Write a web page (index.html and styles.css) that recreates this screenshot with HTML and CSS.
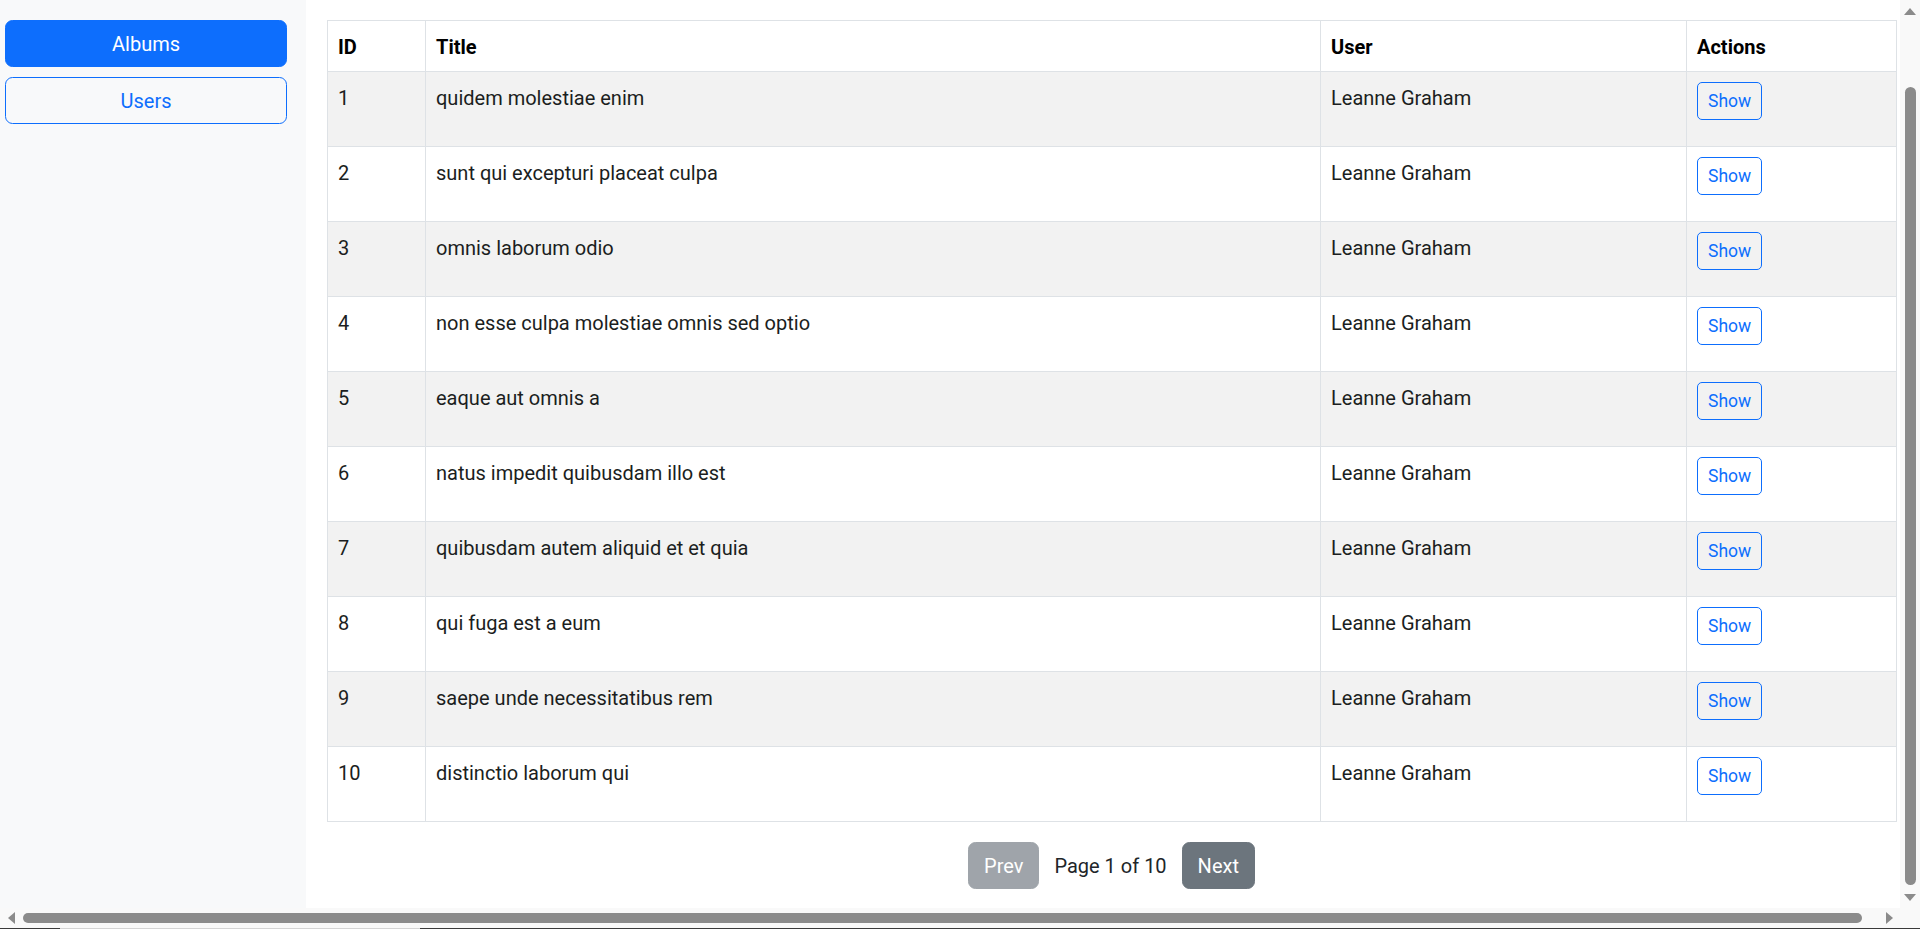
FILE: index.html
```html
<!DOCTYPE html>
<html lang="en">
<head>
<meta charset="utf-8">
<title>Albums</title>
<link rel="stylesheet" href="styles.css">
</head>
<body>
<div class="window">
  <div class="pane">
    <div class="page">
      <aside class="sidebar">
        <button class="nav-btn nav-btn-active" type="button">Albums</button>
        <button class="nav-btn nav-btn-outline" type="button">Users</button>
      </aside>
      <main class="content">
        <table class="data-table">
          <colgroup>
            <col class="col-id">
            <col class="col-title">
            <col class="col-user">
            <col class="col-actions">
          </colgroup>
          <thead>
            <tr><th>ID</th><th>Title</th><th>User</th><th>Actions</th></tr>
          </thead>
          <tbody>
            <tr><td>1</td><td>quidem molestiae enim</td><td>Leanne Graham</td><td class="cell-actions"><button class="show-btn" type="button">Show</button></td></tr>
            <tr><td>2</td><td>sunt qui excepturi placeat culpa</td><td>Leanne Graham</td><td class="cell-actions"><button class="show-btn" type="button">Show</button></td></tr>
            <tr><td>3</td><td>omnis laborum odio</td><td>Leanne Graham</td><td class="cell-actions"><button class="show-btn" type="button">Show</button></td></tr>
            <tr><td>4</td><td>non esse culpa molestiae omnis sed optio</td><td>Leanne Graham</td><td class="cell-actions"><button class="show-btn" type="button">Show</button></td></tr>
            <tr><td>5</td><td>eaque aut omnis a</td><td>Leanne Graham</td><td class="cell-actions"><button class="show-btn" type="button">Show</button></td></tr>
            <tr><td>6</td><td>natus impedit quibusdam illo est</td><td>Leanne Graham</td><td class="cell-actions"><button class="show-btn" type="button">Show</button></td></tr>
            <tr><td>7</td><td>quibusdam autem aliquid et et quia</td><td>Leanne Graham</td><td class="cell-actions"><button class="show-btn" type="button">Show</button></td></tr>
            <tr><td>8</td><td>qui fuga est a eum</td><td>Leanne Graham</td><td class="cell-actions"><button class="show-btn" type="button">Show</button></td></tr>
            <tr><td>9</td><td>saepe unde necessitatibus rem</td><td>Leanne Graham</td><td class="cell-actions"><button class="show-btn" type="button">Show</button></td></tr>
            <tr><td>10</td><td>distinctio laborum qui</td><td>Leanne Graham</td><td class="cell-actions"><button class="show-btn" type="button">Show</button></td></tr>
          </tbody>
        </table>
        <div class="pager">
          <button class="pager-btn pager-btn-disabled" type="button" disabled>Prev</button>
          <span class="pager-label">Page 1 of 10</span>
          <button class="pager-btn" type="button">Next</button>
        </div>
      </main>
    </div>
  </div>

  <div class="vscroll">
    <div class="sb-btn sb-btn-v"><span class="arrow arrow-up"></span></div>
    <div class="vtrack"><div class="vthumb"></div></div>
    <div class="sb-btn sb-btn-v"><span class="arrow arrow-down"></span></div>
  </div>

  <div class="hscroll">
    <div class="sb-btn sb-btn-h"><span class="arrow arrow-left"></span></div>
    <div class="htrack"><div class="hthumb"></div></div>
    <div class="sb-btn sb-btn-h"><span class="arrow arrow-right"></span></div>
  </div>

  <div class="sb-corner"></div>
</div>
<div class="screen-edge"><span class="edge-dark edge-a"></span><span class="edge-light"></span><span class="edge-dark edge-b"></span></div>
</body>
</html>
```
FILE: styles.css
```css
html, body {
  margin: 0;
  padding: 0;
  height: 929px;
  overflow: hidden;
  background: #ffffff;
}

body {
  font-family: Roboto, "Liberation Sans", sans-serif;
  font-size: 20px;
  line-height: 30px;
  color: #212529;
}

/* browser window: content pane + scrollbars */
.window {
  display: grid;
  grid-template-columns: 1900px 20px;
  grid-template-rows: 908px 20px;
  width: 1920px;
  height: 928px;
}

.pane {
  overflow: hidden;
  background: #ffffff;
}

.page {
  display: flex;
  height: 908px;
}

/* sidebar */
.sidebar {
  flex: none;
  width: 306px;
  box-sizing: border-box;
  padding: 20px 19px 0 5px;
  background: #f8f9fa;
  display: flex;
  flex-direction: column;
  gap: 10px;
}

.nav-btn {
  display: block;
  width: 100%;
  font-family: inherit;
  font-size: 20px;
  line-height: 30px;
  padding: 8px 15px 7px;
  border: 1px solid #0d6efd;
  border-radius: 7.5px;
  text-align: center;
  cursor: pointer;
}
.nav-btn-active {
  background: #0d6efd;
  color: #ffffff;
}
.nav-btn-outline {
  background: transparent;
  color: #0d6efd;
}

/* content */
.content {
  flex: 1;
  min-width: 0;
  padding: 20px 4px 0 21px;
  background: #ffffff;
}

.data-table {
  width: 1569px;
  table-layout: fixed;
  border-collapse: collapse;
  border: 1px solid #dee2e6;
}
.col-id { width: 98px; }
.col-title { width: 895px; }
.col-user { width: 366px; }
.col-actions { width: 210px; }

.data-table th,
.data-table td {
  border: 1px solid #dee2e6;
  padding: 11px 10px 9px;
  text-align: left;
  vertical-align: top;
  line-height: 30px;
  font-size: 20px;
}
.data-table th {
  font-weight: 700;
  color: #000000;
}
.data-table td {
  color: #1b1e21;
}
.data-table td.cell-actions {
  padding: 10px;
}
.data-table tbody tr:nth-child(odd) {
  background: #f2f2f2;
}

.show-btn {
  display: inline-block;
  vertical-align: top;
  margin: 0 0 16px 0;
  font-family: inherit;
  font-size: 17.5px;
  line-height: 26px;
  padding: 5px 10px;
  border: 1px solid #0d6efd;
  border-radius: 5px;
  background: transparent;
  color: #0d6efd;
  cursor: pointer;
}

/* pager */
.pager {
  width: 1569px;
  margin-top: 20px;
  display: flex;
  justify-content: center;
  align-items: center;
}
.pager-btn {
  font-family: inherit;
  font-size: 20px;
  line-height: 30px;
  padding: 8px 15px 7px;
  border: 1px solid #6c757d;
  border-radius: 7.5px;
  background: #6c757d;
  color: #ffffff;
}
.pager-btn-disabled {
  opacity: 0.65;
}
.pager-label {
  margin: 0 15px;
  padding-top: 1px;
  color: #212529;
}

/* scrollbars */
.vscroll {
  display: flex;
  flex-direction: column;
  background: #f9f9f9;
}
.hscroll {
  display: flex;
  flex-direction: row;
  background: #f9f9f9;
}
.sb-corner {
  background: #f9f9f9;
}

.sb-btn {
  flex: none;
  display: flex;
  align-items: center;
  justify-content: center;
}
.sb-btn-v {
  height: 22px;
}
.sb-btn-h {
  width: 22px;
}

.vtrack {
  flex: 1;
  padding: 65px 4px 0 5px;
}
.vthumb {
  height: 798px;
  border-radius: 6px;
  background: #8b8b8b;
}

.htrack {
  flex: 1;
  padding: 5px 0 0 1px;
}
.hthumb {
  width: 1839px;
  height: 10px;
  border-radius: 6px;
  background: #8b8b8b;
}

.arrow {
  width: 0;
  height: 0;
  display: block;
}
.arrow-up {
  border-left: 6px solid transparent;
  border-right: 6px solid transparent;
  border-bottom: 7px solid #8b8b8b;
}
.arrow-down {
  border-left: 6px solid transparent;
  border-right: 6px solid transparent;
  border-top: 7px solid #8b8b8b;
}
.arrow-left {
  border-top: 6px solid transparent;
  border-bottom: 6px solid transparent;
  border-right: 7px solid #8b8b8b;
}
.arrow-right {
  border-top: 6px solid transparent;
  border-bottom: 6px solid transparent;
  border-left: 7px solid #8b8b8b;
}

/* bottom edge of the screen below the window */
.screen-edge {
  height: 1px;
  display: flex;
}
.edge-dark {
  background: #3a3a3a;
}
.edge-a { width: 60px; }
.edge-light {
  width: 360px;
  background: #d4d4d4;
}
.edge-b { flex: 1; }
```
